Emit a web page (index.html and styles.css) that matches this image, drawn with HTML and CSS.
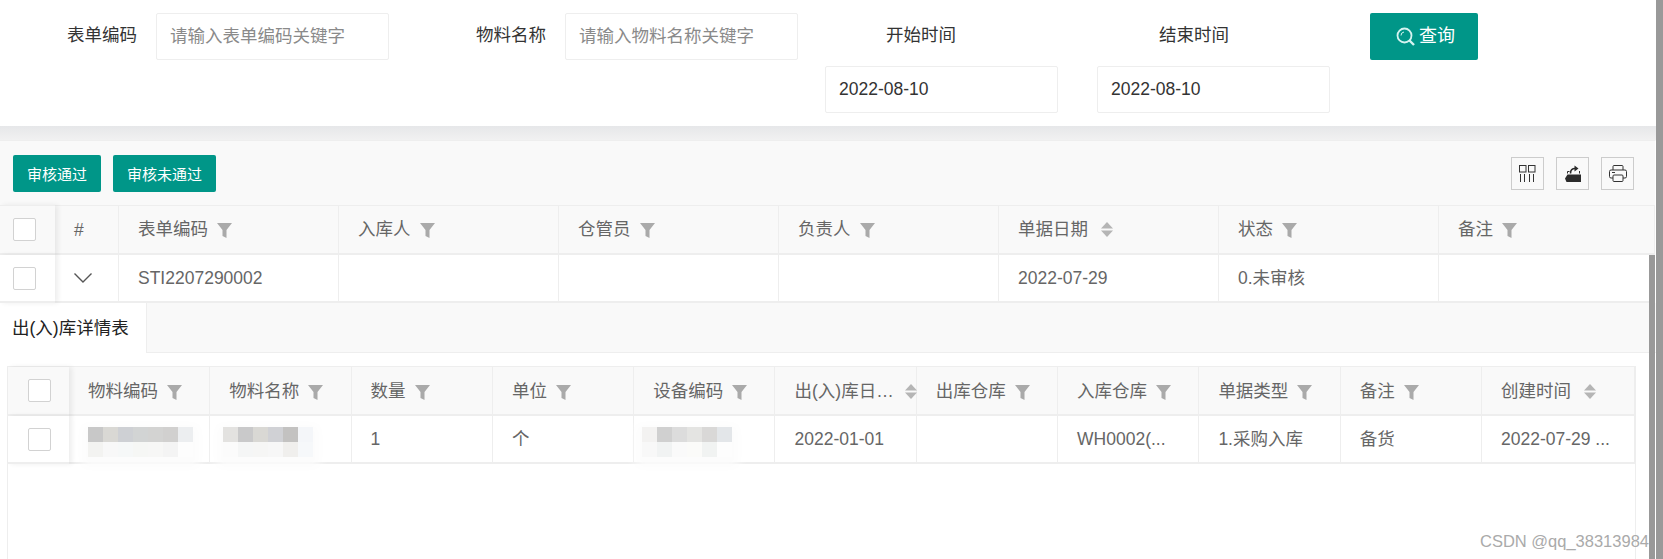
FILE: index.html
```html
<!DOCTYPE html>
<html lang="en">
<head>
  <meta charset="UTF-8">
  <title>出(入)库单审核</title>
  <link rel="stylesheet" href="styles.css">
</head>
<body>
  <svg class="icon-defs" aria-hidden="true">
    <symbol id="filter" viewBox="0 0 15 15">
      <path d="M0 0H15L9.5 7V15L5.5 13V7Z"/>
    </symbol>
    <symbol id="sort" viewBox="0 0 12 15">
      <path d="M6 0L12 6.5H0Z"/>
      <path d="M0 8.5H12L6 15Z"/>
    </symbol>
  </svg>

  <div class="page">
    <!-- search form -->
    <form class="search-form">
      <div class="form-item">
        <label class="form-label">表单编码</label>
        <input class="form-input" type="text" placeholder="请输入表单编码关键字">
      </div>
      <div class="form-item">
        <label class="form-label">物料名称</label>
        <input class="form-input" type="text" placeholder="请输入物料名称关键字">
      </div>
      <div class="form-item date-item">
        <label class="form-label">开始时间</label>
        <input class="form-input" type="text" value="2022-08-10">
      </div>
      <div class="form-item date-item date-end">
        <label class="form-label">结束时间</label>
        <input class="form-input" type="text" value="2022-08-10">
      </div>
      <button class="search-button" type="button">
        <svg width="20" height="20" viewBox="0 0 20 20" fill="none" stroke="#d6f3f0">
          <circle cx="8.5" cy="8.5" r="7" stroke-width="1.8"/>
          <path d="M5 8.5A3.5 3.5 0 0 1 8 5" stroke-width="1"/>
          <path d="M13.5 13.5L18 18" stroke-width="2.4"/>
        </svg>
        <span class="search-text">查询</span>
      </button>
    </form>
    <div class="form-shadow"></div>

    <!-- toolbar -->
    <div class="toolbar">
      <div class="toolbar-left">
        <button class="small-button" type="button">审核通过</button>
        <button class="small-button" type="button">审核未通过</button>
      </div>
      <div class="toolbar-right">
        <div class="tool-icon">
          <svg width="17" height="17" viewBox="0 0 17 17" fill="none" stroke="#333" stroke-width="1">
            <rect x="0.5" y="0.5" width="6.5" height="6.5"/>
            <rect x="9.5" y="0.5" width="6.5" height="6.5"/>
            <path d="M1.5 9V17M5.5 9V17M10.5 9V17M14.5 9V17"/>
          </svg>
        </div>
        <div class="tool-icon">
          <svg width="16" height="17" viewBox="0 0 16 17">
            <path d="M0 13.5L2.5 9.5H16V17H1.5Z" fill="#2b2b2b"/>
            <path d="M2.5 8.5V6.5H4.5M14.5 8.5V6" fill="none" stroke="#2b2b2b"/>
            <path d="M5.5 8.5C5.5 5 7.5 3.5 10 3.5" fill="none" stroke="#2b2b2b" stroke-width="1.6"/>
            <path d="M9.5 0.5L13.5 3.5L9.5 6.5Z" fill="#2b2b2b"/>
          </svg>
        </div>
        <div class="tool-icon">
          <svg width="18" height="17" viewBox="0 0 18 17" fill="none" stroke="#333" stroke-width="1">
            <path d="M4 5V1.5Q4 .5 5 .5H13Q14 .5 14 1.5V5"/>
            <path d="M4 13H2Q.5 13 .5 11.5V6.5Q.5 5 2 5H16Q17.5 5 17.5 6.5V11.5Q17.5 13 16 13H14"/>
            <rect x="4" y="10" width="10" height="6.5" rx="1"/>
            <path d="M3 7.5H6"/>
          </svg>
        </div>
      </div>
    </div>

    <!-- main table -->
    <table class="grid main-grid">
      <colgroup>
        <col class="col-check">
        <col class="col-index">
        <col class="col-main"><col class="col-main"><col class="col-main">
        <col class="col-main"><col class="col-main"><col class="col-main">
        <col>
      </colgroup>
      <thead>
        <tr>
          <th class="fixed-cell"><span class="checkbox"></span></th>
          <th class="index-cell">#</th>
          <th>表单编码<svg class="filter-icon"><use href="#filter"/></svg></th>
          <th>入库人<svg class="filter-icon"><use href="#filter"/></svg></th>
          <th>仓管员<svg class="filter-icon"><use href="#filter"/></svg></th>
          <th>负责人<svg class="filter-icon"><use href="#filter"/></svg></th>
          <th>单据日期<svg class="sort-icon"><use href="#sort"/></svg></th>
          <th>状态<svg class="filter-icon"><use href="#filter"/></svg></th>
          <th>备注<svg class="filter-icon"><use href="#filter"/></svg></th>
        </tr>
      </thead>
      <tbody>
        <tr>
          <td class="fixed-cell"><span class="checkbox"></span></td>
          <td class="index-cell">
            <svg class="chevron" width="18" height="10" viewBox="0 0 18 10" fill="none" stroke="#555" stroke-width="1.4">
              <path d="M.5 .5L9 9L17.5 .5"/>
            </svg>
          </td>
          <td>STI2207290002</td>
          <td></td>
          <td></td>
          <td></td>
          <td>2022-07-29</td>
          <td>0.未审核</td>
          <td></td>
        </tr>
      </tbody>
    </table>

    <!-- detail tabs -->
    <div class="tab-bar">
      <div class="tab active">出(入)库详情表</div>
    </div>

    <div class="detail">
      <table class="grid detail-grid">
        <colgroup>
          <col class="col-detail-check">
          <col class="col-detail"><col class="col-detail"><col class="col-detail"><col class="col-detail"><col class="col-detail">
          <col class="col-detail"><col class="col-detail"><col class="col-detail"><col class="col-detail"><col class="col-detail">
          <col>
        </colgroup>
        <thead>
          <tr>
            <th class="fixed-cell"><span class="checkbox"></span></th>
            <th>物料编码<svg class="filter-icon"><use href="#filter"/></svg></th>
            <th>物料名称<svg class="filter-icon"><use href="#filter"/></svg></th>
            <th>数量<svg class="filter-icon"><use href="#filter"/></svg></th>
            <th>单位<svg class="filter-icon"><use href="#filter"/></svg></th>
            <th>设备编码<svg class="filter-icon"><use href="#filter"/></svg></th>
            <th class="cut-cell">出(入)库日…<svg class="sort-icon"><use href="#sort"/></svg></th>
            <th>出库仓库<svg class="filter-icon"><use href="#filter"/></svg></th>
            <th>入库仓库<svg class="filter-icon"><use href="#filter"/></svg></th>
            <th>单据类型<svg class="filter-icon"><use href="#filter"/></svg></th>
            <th>备注<svg class="filter-icon"><use href="#filter"/></svg></th>
            <th>创建时间<svg class="sort-icon"><use href="#sort"/></svg></th>
          </tr>
        </thead>
        <tbody>
          <tr>
            <td class="fixed-cell"><span class="checkbox"></span></td>
            <td><div class="mosaic mosaic-code"></div></td>
            <td><div class="mosaic mosaic-name"></div></td>
            <td>1</td>
            <td>个</td>
            <td><div class="mosaic mosaic-device"></div></td>
            <td>2022-01-01</td>
            <td></td>
            <td>WH0002(...</td>
            <td>1.采购入库</td>
            <td>备货</td>
            <td>2022-07-29 ...</td>
          </tr>
        </tbody>
      </table>
    </div>

    <div class="inner-thumb"></div>
    <div class="watermark">CSDN @qq_38313984</div>
  </div>
  <div class="page-scrollbar"></div>
</body>
</html>
```

FILE: styles.css
```css
* {
  margin: 0;
  padding: 0;
  box-sizing: border-box;
}

body {
  font-family: "Liberation Sans", "Noto Sans CJK SC", sans-serif;
  font-size: 17.5px;
  color: #333;
  background: #fff;
  height: 559px;
  display: flex;
  overflow: hidden;
}

.icon-defs {
  display: none;
}

.page {
  position: relative;
  flex: 1;
  display: flex;
  flex-direction: column;
  min-width: 0;
}

.page-scrollbar {
  width: 7px;
  background: #999;
}

/* search form */
.search-form {
  height: 126px;
  padding-top: 13px;
  display: grid;
  grid-template-columns: 409px 416px 272px 273px 108px;
  align-items: start;
  background: #fff;
}

.form-item {
  display: flex;
}

.form-label {
  width: 156px;
  padding-right: 19px;
  text-align: right;
  line-height: 45px;
  color: #333;
}

.form-input {
  width: 233px;
  height: 47px;
  padding: 0 13px;
  border: 1px solid #eee;
  border-radius: 2px;
  font: inherit;
  color: #333;
  outline: none;
}

.form-input::placeholder {
  color: #8a8a8a;
}

.date-item {
  flex-direction: column;
  gap: 8px;
}

.date-item .form-label {
  width: 131px;
  padding-right: 0;
}

.date-end .form-label {
  width: 132px;
}

.search-button {
  height: 47px;
  padding-left: 3px;
  background: #009688;
  color: #fff;
  border: none;
  border-radius: 2px;
  font: inherit;
  font-size: 18px;
  display: flex;
  align-items: center;
  justify-content: center;
  gap: 3px;
}

.search-text {
  line-height: 18px;
  padding-bottom: 2px;
}

.form-shadow {
  height: 14px;
  background: linear-gradient(#e6e7e9, #f1f1f1);
}

/* toolbar */
.toolbar {
  height: 65px;
  padding: 0 21px 0 13px;
  background: #f9f9f9;
  border-top: 1px solid #eee;
  border-right: 1px solid #fff;
  display: flex;
  align-items: center;
  justify-content: space-between;
}

.toolbar-left {
  display: flex;
  gap: 12px;
}

.small-button {
  height: 37px;
  padding: 0 14px;
  background: #009688;
  color: #fff;
  border: none;
  border-radius: 2px;
  font: inherit;
  font-size: 15px;
}

.toolbar-right {
  display: flex;
  gap: 12px;
}

.tool-icon {
  width: 33px;
  height: 33px;
  border: 1px solid #ccc;
  display: flex;
  align-items: center;
  justify-content: center;
}

/* tables */
.grid {
  width: 100%;
  table-layout: fixed;
  border-collapse: separate;
  border-spacing: 0;
  line-height: 24px;
  color: #666;
}

.grid th,
.grid td {
  padding: 0 19px;
  text-align: left;
  font-weight: normal;
  white-space: nowrap;
  border-right: 1px solid #eee;
  border-bottom: 1px solid #eee;
}

.grid th {
  background: #f9f9f9;
}

.grid td {
  background: #fff;
}

.grid .fixed-cell {
  position: relative;
  z-index: 1;
  padding: 0 0 0 13px;
  border-right: none;
  box-shadow: 3px 0 5px rgba(0, 0, 0, 0.07);
}

.main-grid th {
  height: 50px;
  padding-bottom: 2px;
  border-top: 1px solid #eee;
  border-bottom-width: 2px;
}

.main-grid td {
  height: 48px;
  border-bottom-width: 2px;
}

.main-grid {
  border-right: 1px solid #fff;
}

.col-check {
  width: 55px;
}

.col-index {
  width: 64px;
}

.col-main {
  width: 220px;
}

.grid .index-cell {
  padding: 0 0 0 19px;
}

.chevron {
  display: block;
}

.checkbox {
  display: block;
  width: 23px;
  height: 23px;
  background: #fff;
  border: 1px solid #d2d2d2;
  border-radius: 2px;
}

.filter-icon {
  width: 15px;
  height: 15px;
  margin-left: 9px;
  vertical-align: -3px;
  fill: #aaa;
}

.sort-icon {
  width: 12px;
  height: 15px;
  margin-left: 13px;
  vertical-align: -2px;
  fill: #b5b5b5;
}

/* detail tabs */
.tab-bar {
  height: 50px;
  background: #f9f9f9;
  border-bottom: 1px solid #eee;
}

.tab {
  width: 147px;
  height: 50px;
  padding-left: 12px;
  line-height: 50px;
  color: #222;
  background: #fff;
  border-right: 1px solid #eee;
}

.detail {
  flex: 1;
  margin: 13px 20px 0 7px;
  border: 1px solid #eee;
  border-bottom: none;
}

.detail-grid th {
  height: 49px;
  border-bottom-width: 2px;
}

.detail-grid td {
  height: 48px;
  border-bottom-width: 2px;
}

.col-detail-check {
  width: 61px;
}

.col-detail {
  width: 141.3px;
}

.detail-grid .fixed-cell {
  padding-left: 20px;
}

.detail-grid .cut-cell {
  padding-right: 0;
}

.detail-grid .cut-cell .sort-icon {
  margin-left: 11px;
}

/* blurred-out cells */
.mosaic {
  width: 105px;
  height: 30px;
  margin-top: 6px;
  background-repeat: no-repeat;
  background-size: 100% 15px;
  background-position: 0 0, 0 15px;
  box-shadow: 0 4px 10px 6px #fcfcfc;
}

.mosaic-code {
  background-image:
    linear-gradient(90deg, #c8c8c8 0 15px, #d9d8d4 0 30px, #ced0d4 0 45px, #d2d4d4 0 60px, #d3d3d2 0 75px, #d1d0cf 0 90px, #eceef0 0),
    linear-gradient(90deg, #f3f3f1 0 15px, #f8f8f8 0 30px, #f6f8f8 0 45px, #f6f7f5 0 60px, #f7f7f6 0 75px, #f4f4f4 0 90px, #fdfdfd 0);
}

.mosaic-name {
  width: 90px;
  margin-left: -6px;
  background-image:
    linear-gradient(90deg, #e3e2e0 0 15px, #c9c9ca 0 30px, #d9d8d4 0 45px, #d0d1d5 0 60px, #c3c2c1 0 75px, #f4f6f9 0),
    linear-gradient(90deg, #fbfbfb 0 15px, #f5f6f6 0 30px, #f6f6f5 0 45px, #f7f7f7 0 60px, #f0efed 0 75px, #f6f8fa 0);
}

.mosaic-device {
  width: 90px;
  margin-left: -11px;
  background-image:
    linear-gradient(90deg, #f3f2f1 0 15px, #d0d0d0 0 30px, #dcdcdc 0 45px, #e4e4e2 0 60px, #d9d8d7 0 75px, #e3e6e9 0),
    linear-gradient(90deg, #f8f8f8 0 15px, #f1f3f3 0 30px, #fafafa 0 45px, #fbfbf9 0 60px, #f1f3f2 0 75px, #fdfdfd 0);
}

/* overlays */
.inner-thumb {
  position: absolute;
  top: 255px;
  right: 1px;
  bottom: 0;
  width: 6px;
  background: #999;
}

.watermark {
  position: absolute;
  right: 7px;
  top: 531px;
  font-size: 16.5px;
  line-height: 20px;
  color: #aaa;
}
```
